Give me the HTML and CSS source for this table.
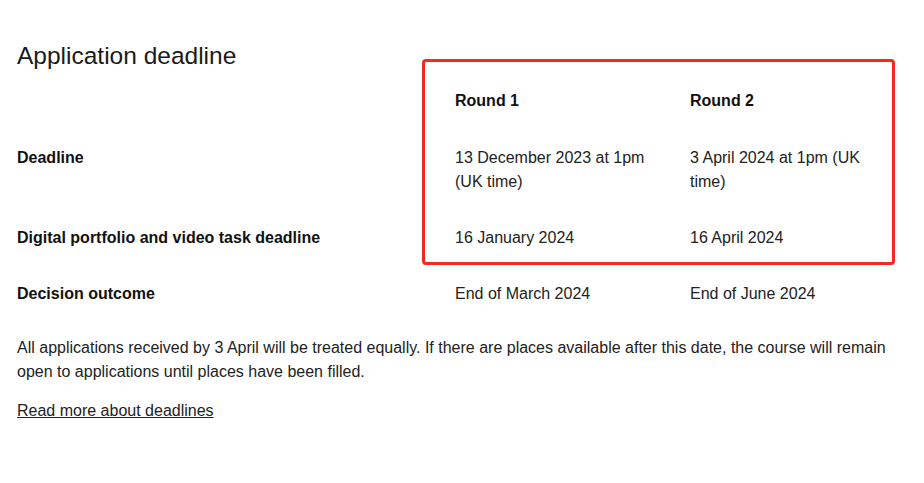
FILE: index.html
```html
<!DOCTYPE html>
<html lang="en">
<head>
<meta charset="utf-8">
<title>Application deadline</title>
<link rel="stylesheet" href="styles.css">
</head>
<body>
<main class="page">
  <h2 class="title">Application deadline</h2>
  <div class="table">
    <div class="highlight" aria-hidden="true"></div>
    <div class="cell cell-top"></div>
    <div class="cell head cell-top">Round 1</div>
    <div class="cell head cell-top">Round 2</div>

    <div class="cell head">Deadline</div>
    <div class="cell">13 December 2023 at 1pm (UK time)</div>
    <div class="cell">3 April 2024 at 1pm (UK time)</div>

    <div class="cell head">Digital portfolio and video task deadline</div>
    <div class="cell">16 January 2024</div>
    <div class="cell">16 April 2024</div>

    <div class="cell head">Decision outcome</div>
    <div class="cell">End of March 2024</div>
    <div class="cell">End of June 2024</div>
  </div>
  <p class="note">All applications received by 3 April will be treated equally. If there are places available after this date, the course will remain open to applications until places have been filled.</p>
  <p class="more"><a href="#" class="link">Read more about deadlines</a></p>
</main>
</body>
</html>
```

FILE: styles.css
```css
* { box-sizing: border-box; }
html, body {
  margin: 0;
  background: #ffffff;
}
body {
  font-family: "Liberation Sans", Arial, sans-serif;
  color: #222222;
  font-size: 16px;
  line-height: 24px;
}
.page {
  padding: 40px 17px 0 17px;
  width: 924px;
}
.title {
  margin: 0;
  font-size: 24.5px;
  line-height: 32px;
  font-weight: 400;
  color: #1a1a1a;
}
.table {
  position: relative;
  display: grid;
  grid-template-columns: 438px 235px 1fr;
  margin-top: 1px;
}
.cell {
  padding: 16px 24px 16px 0;
}
.cell-top {
  padding-bottom: 17px;
}
.head {
  font-weight: 700;
  color: #111111;
}
.highlight {
  position: absolute;
  left: 405px;
  top: -14px;
  width: 473px;
  height: 206px;
  border: 3px solid #f52a1f;
  border-radius: 4px;
  pointer-events: none;
}
.note {
  margin: 14px 0 0 0;
  width: 880px;
}
.more {
  margin: 15px 0 0 0;
}
.link {
  color: #222222;
  text-decoration: underline;
}
```
